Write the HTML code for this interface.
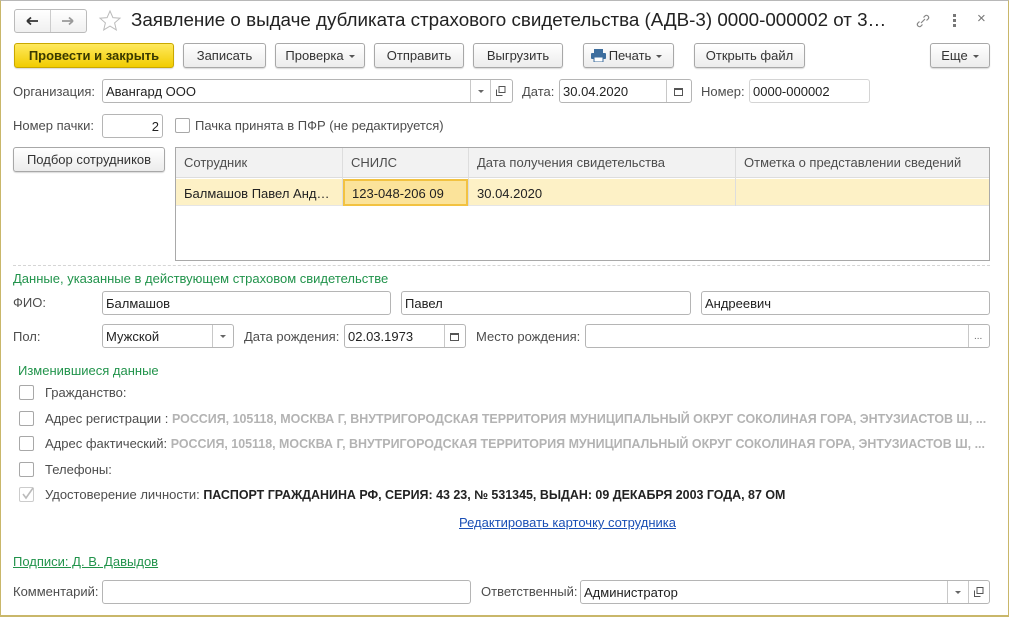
<!DOCTYPE html>
<html><head><meta charset="utf-8">
<style>
*{box-sizing:border-box;margin:0;padding:0}
body{width:1010px;height:617px;background:#fff;font-family:"Liberation Sans",Arial,sans-serif;font-size:13px;color:#333;position:relative;overflow:hidden}
.win{position:absolute;left:0;top:0;width:1009px;height:617px;border:1px solid #c9b76a;border-top-color:#b8b8b8;border-bottom:2px solid #c9b76a}
.a{position:absolute}
.btn{position:absolute;height:25px;border:1px solid #a8a8a8;border-radius:3px;background:linear-gradient(#fff,#ececec);box-shadow:0 1px 1px rgba(0,0,0,.15);text-align:center;line-height:23px;color:#333;font-size:13px}
.btn.y{background:linear-gradient(#ffe95e,#f1cc00);border-color:#c9a800;font-weight:bold;color:#3a3a00}
.tri{display:inline-block;width:0;height:0;border-left:3px solid transparent;border-right:3px solid transparent;border-top:3px solid #555;vertical-align:middle;margin-left:5px}
.lbl{position:absolute;color:#4d4d4d;line-height:16px}
.f{position:absolute;height:24px;border:1px solid #b5b5b5;border-radius:3px;background:#fff;line-height:23px;padding-left:3px;color:#222}
.sep{position:absolute;top:0;bottom:0;border-left:1px solid #c8c8c8}
.dd{position:absolute;top:10px;width:0;height:0;border-left:3px solid transparent;border-right:3px solid transparent;border-top:3px solid #666}
.cb{position:absolute;width:15px;height:15px;border:1px solid #a8a8a8;border-radius:2px;background:#fff}
.green{color:#21934b}
.gray{color:#b3b3b3;font-weight:bold;font-size:12.45px}
.cal{position:absolute;width:9px;height:8px;border:1px solid #555;border-top-width:2px;top:8px}
</style></head><body>
<div class="win"></div>

<!-- nav -->
<div class="a" style="left:14px;top:9px;width:73px;height:24px;border:1px solid #bbb;border-radius:3px;background:linear-gradient(#fff,#f0f0f0)"></div>
<div class="a" style="left:50px;top:10px;height:22px;border-left:1px solid #ccc"></div>
<svg class="a" style="left:25px;top:14px" width="16" height="14"><path d="M2 7h11M2 7l4-3.5M2 7l4 3.5" stroke="#333" stroke-width="1.8" fill="none"/></svg>
<svg class="a" style="left:60px;top:14px" width="16" height="14"><path d="M2 7h11M13 7l-4-3.5M13 7l-4 3.5" stroke="#999" stroke-width="1.8" fill="none"/></svg>
<svg class="a" style="left:98px;top:9px" width="24" height="24"><path d="M12 2l2.9 6.6 7.1.6-5.4 4.7 1.7 7-6.3-3.8-6.3 3.8 1.7-7L2 9.2l7.1-.6z" fill="none" stroke="#bbb" stroke-width="1"/></svg>
<div class="a" style="left:131px;top:9px;font-size:18.8px;color:#222;white-space:nowrap">Заявление о выдаче дубликата страхового свидетельства (АДВ-3) 0000-000002 от 3…</div>
<svg class="a" style="left:914px;top:12px" width="18" height="18"><path d="M7 11l4-4M5.5 9.5l-2 2a2.3 2.3 0 003 3l2-2M12.5 8.5l2-2a2.3 2.3 0 00-3-3l-2 2" stroke="#888" stroke-width="1.2" fill="none"/></svg>
<div class="a" style="left:953px;top:14px;width:3px;height:3px;background:#777;box-shadow:0 5px #777,0 10px #777"></div>
<div class="a" style="left:977px;top:10px;font-size:15px;color:#777">×</div>

<!-- toolbar -->
<div class="btn y" style="left:14px;top:43px;width:160px">Провести и закрыть</div>
<div class="btn" style="left:183px;top:43px;width:83px">Записать</div>
<div class="btn" style="left:275px;top:43px;width:90px">Проверка<span class="tri"></span></div>
<div class="btn" style="left:374px;top:43px;width:90px">Отправить</div>
<div class="btn" style="left:473px;top:43px;width:90px">Выгрузить</div>
<div class="btn" style="left:583px;top:43px;width:91px;padding-left:14px">Печать<span class="tri"></span></div>
<svg class="a" style="left:591px;top:49px" width="15" height="13"><rect x="3" y="0" width="9" height="4" fill="#3d6e9e"/><rect x="0" y="4" width="15" height="6" rx="1" fill="#3d6e9e"/><rect x="3" y="8" width="9" height="5" fill="#fff" stroke="#3d6e9e"/></svg>
<div class="btn" style="left:694px;top:43px;width:111px">Открыть файл</div>
<div class="btn" style="left:930px;top:43px;width:60px">Еще<span class="tri"></span></div>

<!-- row org -->
<div class="lbl" style="left:13px;top:84px">Организация:</div>
<div class="f" style="left:102px;top:79px;width:411px">Авангард ООО
<div class="sep" style="left:367px"></div><div class="dd" style="left:375px"></div>
<div class="sep" style="left:387px"></div>
<svg class="a" style="left:393px;top:6px" width="10" height="10"><rect x="3" y="0.5" width="6" height="6" fill="none" stroke="#555"/><path d="M0.5 3.5v6h6" fill="none" stroke="#555"/></svg></div>
<div class="lbl" style="left:522px;top:84px">Дата:</div>
<div class="f" style="left:559px;top:79px;width:133px">30.04.2020<div class="sep" style="left:106px"></div><div class="cal" style="left:114px"></div></div>
<div class="lbl" style="left:701px;top:84px">Номер:</div>
<div class="f" style="left:749px;top:79px;width:121px;border-color:#d4d4d4">0000-000002</div>

<!-- row pack -->
<div class="lbl" style="left:13px;top:118px">Номер пачки:</div>
<div class="f" style="left:102px;top:114px;width:61px;text-align:right;padding-right:3px">2</div>
<div class="cb" style="left:175px;top:118px"></div>
<div class="lbl" style="left:195px;top:118px">Пачка принята в ПФР (не редактируется)</div>

<!-- table -->
<div class="btn" style="left:13px;top:147px;width:152px">Подбор сотрудников</div>
<div class="a" style="left:175px;top:147px;width:815px;height:114px;border:1px solid #a9a9a9;background:#fff"></div>
<div class="a" style="left:176px;top:148px;width:813px;height:30px;background:#f2f2f2;border-bottom:1px solid #ddd"></div>
<div class="a" style="left:176px;top:179px;width:813px;height:27px;background:#fdf1c6;border-bottom:1px solid #e5e5e5"></div>
<div class="a" style="left:342px;top:148px;height:58px;border-left:1px solid #ddd"></div>
<div class="a" style="left:468px;top:148px;height:58px;border-left:1px solid #ddd"></div>
<div class="a" style="left:735px;top:148px;height:58px;border-left:1px solid #ddd"></div>
<div class="a" style="left:343px;top:179px;width:125px;height:27px;background:#fbe39a;border:2px solid #f2c241"></div>
<div class="lbl" style="left:184px;top:155px">Сотрудник</div>
<div class="lbl" style="left:351px;top:155px">СНИЛС</div>
<div class="lbl" style="left:477px;top:155px">Дата получения свидетельства</div>
<div class="lbl" style="left:744px;top:155px">Отметка о представлении сведений</div>
<div class="lbl" style="left:184px;top:186px;color:#222">Балмашов Павел Анд…</div>
<div class="lbl" style="left:352px;top:186px;color:#222">123-048-206 09</div>
<div class="lbl" style="left:477px;top:186px;color:#222">30.04.2020</div>

<div class="a" style="left:13px;top:265px;width:977px;border-top:1px dashed #d5d5d5"></div>
<div class="lbl green" style="left:13px;top:271px">Данные, указанные в действующем страховом свидетельстве</div>

<div class="lbl" style="left:13px;top:295px">ФИО:</div>
<div class="f" style="left:102px;top:291px;width:289px">Балмашов</div>
<div class="f" style="left:401px;top:291px;width:290px">Павел</div>
<div class="f" style="left:701px;top:291px;width:289px">Андреевич</div>

<div class="lbl" style="left:13px;top:329px">Пол:</div>
<div class="f" style="left:102px;top:324px;width:132px">Мужской<div class="sep" style="left:109px"></div><div class="dd" style="left:117px"></div></div>
<div class="lbl" style="left:244px;top:329px">Дата рождения:</div>
<div class="f" style="left:344px;top:324px;width:122px">02.03.1973<div class="sep" style="left:99px"></div><div class="cal" style="left:105px"></div></div>
<div class="lbl" style="left:476px;top:329px">Место рождения:</div>
<div class="f" style="left:585px;top:324px;width:405px"><div class="sep" style="left:382px"></div><div class="a" style="left:388px;top:0;font-size:10px;color:#666">...</div></div>

<div class="lbl green" style="left:18px;top:363px">Изменившиеся данные</div>
<div class="cb" style="left:19px;top:385px"></div><div class="lbl" style="left:45px;top:385px">Гражданство:</div>
<div class="cb" style="left:19px;top:411px"></div><div class="lbl" style="left:45px;top:411px;white-space:nowrap">Адрес регистрации : <span class="gray">РОССИЯ, 105118, МОСКВА Г, ВНУТРИГОРОДСКАЯ ТЕРРИТОРИЯ МУНИЦИПАЛЬНЫЙ ОКРУГ СОКОЛИНАЯ ГОРА, ЭНТУЗИАСТОВ Ш, ...</span></div>
<div class="cb" style="left:19px;top:436px"></div><div class="lbl" style="left:45px;top:436px;white-space:nowrap">Адрес фактический: <span class="gray">РОССИЯ, 105118, МОСКВА Г, ВНУТРИГОРОДСКАЯ ТЕРРИТОРИЯ МУНИЦИПАЛЬНЫЙ ОКРУГ СОКОЛИНАЯ ГОРА, ЭНТУЗИАСТОВ Ш, ...</span></div>
<div class="cb" style="left:19px;top:462px"></div><div class="lbl" style="left:45px;top:462px">Телефоны:</div>
<div class="cb" style="left:19px;top:487px;border-color:#ccc"></div>
<svg class="a" style="left:21px;top:487px" width="14" height="13"><path d="M2 7l3 4 7-10" stroke="#bbb" stroke-width="1.6" fill="none"/></svg>
<div class="lbl" style="left:45px;top:487px;white-space:nowrap">Удостоверение личности: <b style="color:#222;font-size:12.45px">ПАСПОРТ ГРАЖДАНИНА РФ, СЕРИЯ: 43 23, № 531345, ВЫДАН: 09 ДЕКАБРЯ 2003 ГОДА, 87 ОМ</b></div>

<div class="lbl" style="left:459px;top:515px;color:#1a4fb5;text-decoration:underline">Редактировать карточку сотрудника</div>
<div class="lbl green" style="left:13px;top:554px;text-decoration:underline">Подписи: Д. В. Давыдов</div>

<div class="lbl" style="left:13px;top:584px">Комментарий:</div>
<div class="f" style="left:102px;top:580px;width:369px"></div>
<div class="lbl" style="left:481px;top:584px">Ответственный:</div>
<div class="f" style="left:580px;top:580px;width:410px">Администратор
<div class="sep" style="left:366px"></div><div class="dd" style="left:374px"></div>
<div class="sep" style="left:387px"></div>
<svg class="a" style="left:393px;top:6px" width="10" height="10"><rect x="3" y="0.5" width="6" height="6" fill="none" stroke="#555"/><path d="M0.5 3.5v6h6" fill="none" stroke="#555"/></svg></div>
</body></html>
